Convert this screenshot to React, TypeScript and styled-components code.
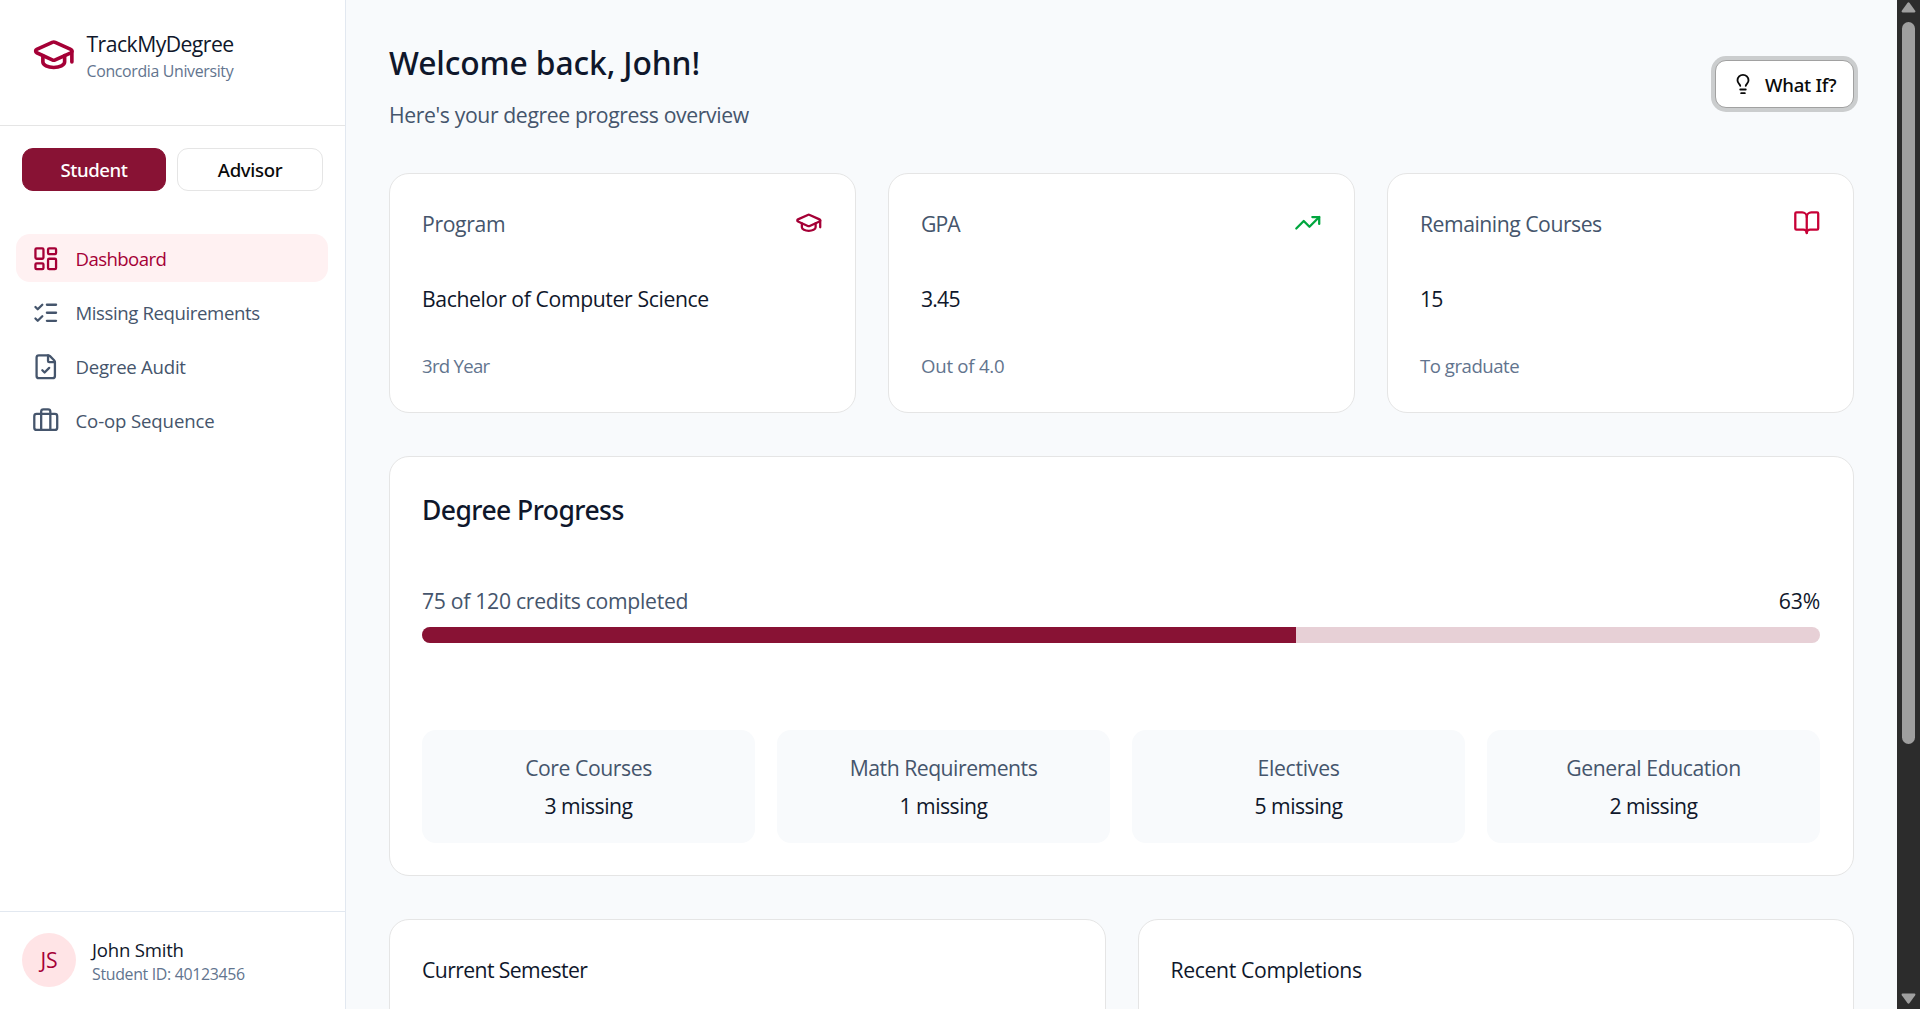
import React from "react";
import styled, { createGlobalStyle, css } from "styled-components";
import {
  BookOpen,
  Briefcase,
  FileCheck,
  GraduationCap,
  LayoutDashboard,
  Lightbulb,
  ListChecks,
  TrendingUp,
} from "lucide-react";

const color = {
  ink: "#0f172b",
  slate: "#45556c",
  muted: "#62748e",
  maroon: "#881234",
  rose: "#a50036",
  line: "#e2e8f0",
  border: "#e5e5e5",
  canvas: "#f8fafc",
};

const GlobalStyle = createGlobalStyle`
  *, *::before, *::after { box-sizing: border-box; }
  body {
    margin: 0;
    overflow: hidden;
    background: ${color.canvas};
    color: ${color.ink};
    font-family: "Open Sans", "Noto Sans", sans-serif;
  }
  button { font: inherit; }
  h1, h2, h3, p { margin: 0; font-weight: 400; }
  svg { display: block; flex: none; }
`;

const strong = css`
  font-family: "Noto Sans", "Open Sans", sans-serif;
  font-weight: 500;
`;

const Shell = styled.div`
  display: grid;
  grid-template-columns: 346px minmax(0, 1fr) 23px;
  height: 1009px;
  overflow: hidden;
`;

/* ---------- text ---------- */

interface TextProps {
  $track?: number;
  $tone?: string;
}

const Text = styled.p<TextProps>`
  font-size: 21.2px;
  line-height: 33px;
  white-space: nowrap;
  color: ${(p) => p.$tone ?? color.ink};
  letter-spacing: ${(p) => p.$track ?? 0}px;
`;

const SmallText = styled(Text)`
  font-size: 18.6px;
  line-height: 27px;
`;

const TinyText = styled(Text)`
  font-size: 15.9px;
  line-height: 22px;
`;

/* ---------- sidebar ---------- */

const Sidebar = styled.aside`
  display: flex;
  flex-direction: column;
  background: #fff;
  border-right: 1px solid ${color.line};
`;

const Brand = styled.div`
  display: flex;
  align-items: center;
  gap: 11px;
  height: 126px;
  padding: 0 32px 15px;
  border-bottom: 1px solid ${color.border};
`;

const BrandName = styled(Text)`
  line-height: 32px;
`;

const RoleSwitch = styled.div`
  display: grid;
  grid-template-columns: 144px 146px;
  gap: 11px;
  padding: 22px 22px 0;
`;

const RoleButton = styled.button<{ $active?: boolean; $track: number }>`
  ${strong}
  height: 43px;
  padding: 0;
  border: 1px solid ${(p) => (p.$active ? color.maroon : color.border)};
  border-radius: 11px;
  background: ${(p) => (p.$active ? color.maroon : "#fff")};
  color: ${(p) => (p.$active ? "#fff" : "#0a0a0a")};
  font-size: 18.6px;
  line-height: 27px;
  letter-spacing: ${(p) => p.$track}px;
`;

const Nav = styled.nav`
  display: flex;
  flex-direction: column;
  flex: 1;
  gap: 6px;
  padding: 43px 17px 0 16px;
`;

const NavItem = styled.a<{ $active?: boolean }>`
  display: flex;
  align-items: center;
  gap: 16px;
  height: 48px;
  padding: 1px 16px 0;
  border-radius: 14px;
  background: ${(p) => (p.$active ? "#fff1f2" : "transparent")};
  color: ${(p) => (p.$active ? color.rose : color.slate)};
`;

const Profile = styled.div`
  display: flex;
  align-items: center;
  gap: 16px;
  height: 98px;
  padding: 0 22px;
  border-top: 1px solid ${color.line};
`;

const Avatar = styled.div`
  display: grid;
  place-items: center;
  width: 54px;
  height: 54px;
  margin-bottom: 2px;
  border-radius: 50%;
  background: #ffe4e6;
`;

/* ---------- main ---------- */

const Main = styled.main`
  display: flex;
  flex-direction: column;
  gap: 43px;
  padding: 44px 43px 0;
  overflow: hidden;
`;

const PageHeader = styled.header`
  display: flex;
  justify-content: space-between;
  align-items: flex-start;
  height: 86px;
`;

const PageTitle = styled.h1`
  ${strong}
  margin: 1px 0 17px;
  font-size: 31.8px;
  line-height: 36px;
  letter-spacing: -0.12px;
  white-space: nowrap;
`;

const WhatIfButton = styled.button`
  ${strong}
  display: flex;
  align-items: center;
  gap: 11px;
  width: 139px;
  height: 48px;
  margin-top: 16px;
  padding: 0 0 0 16px;
  border: 1px solid #a1a1a1;
  border-radius: 11px;
  background: #fff;
  box-shadow: 0 0 0 4px #cbcdce;
  color: #0a0a0a;
  font-size: 18.6px;
  line-height: 27px;
  letter-spacing: -0.25px;
  white-space: nowrap;
`;

const StatRow = styled.section`
  display: grid;
  grid-template-columns: repeat(3, 1fr);
  gap: 32px;
  flex: none;
`;

const Card = styled.article`
  flex: none;
  padding: 33px 33px 33px 32px;
  border: 1px solid ${color.border};
  border-radius: 20px;
  background: #fff;
`;

const StatCard = styled(Card)`
  height: 240px;
`;

const StatHead = styled.div`
  display: flex;
  justify-content: space-between;
  align-items: flex-start;
  margin-bottom: 42px;
`;

const StatIcon = styled.span`
  display: block;
  margin-top: 2px;
`;

const StatValue = styled(Text)`
  margin-bottom: 37px;
`;

const ProgressCard = styled(Card)`
  height: 420px;
`;

const SectionTitle = styled.h2`
  ${strong}
  margin-bottom: 54px;
  font-size: 26.5px;
  line-height: 40px;
  letter-spacing: -0.56px;
  white-space: nowrap;
`;

const Spread = styled.div`
  display: flex;
  justify-content: space-between;
`;

const Track = styled.div`
  height: 16px;
  margin: 10px 0 87px;
  border-radius: 8px;
  background: #e7d0d6;
  overflow: hidden;
`;

const Fill = styled.div`
  height: 100%;
  background: ${color.maroon};
`;

const Tiles = styled.div`
  display: grid;
  grid-template-columns: repeat(4, 1fr);
  gap: 22px;
`;

const Tile = styled.div`
  display: flex;
  flex-direction: column;
  align-items: center;
  gap: 5px;
  height: 113px;
  padding-top: 21px;
  border-radius: 14px;
  background: ${color.canvas};
`;

const ListRow = styled.section`
  display: grid;
  grid-template-columns: repeat(2, 1fr);
  gap: 32px;
  flex: none;
`;

const ListCard = styled(Card)`
  height: 300px;
`;

/* ---------- scrollbar ---------- */

const ScrollTrack = styled.div`
  display: flex;
  flex-direction: column;
  align-items: center;
  justify-content: space-between;
  padding: 2px 0 5px;
  background: #2c2c2c;
`;

const ScrollThumb = styled.div`
  width: 13px;
  height: 722px;
  margin: 9px 0 auto;
  border-radius: 7px;
  background: #9f9f9f;
`;

const Arrow: React.FC<{ down?: boolean }> = ({ down }) => (
  <svg width="15" height="11" viewBox="0 0 15 11">
    <path
      d={
        down
          ? "M1.5 .5h12q1.4 .4 .7 1.7L8.6 10q-1.1 1.3-2.2 0L.8 2.2Q.1 .9 1.5 .5z"
          : "M1.5 10.5h12q1.4-.4 .7-1.7L8.6 1q-1.1-1.3-2.2 0L.8 8.8Q.1 10.1 1.5 10.5z"
      }
      fill="#9f9f9f"
    />
  </svg>
);

const navItems = [
  { label: "Dashboard", Icon: LayoutDashboard, track: -0.57, active: true },
  { label: "Missing Requirements", Icon: ListChecks, track: -0.4 },
  { label: "Degree Audit", Icon: FileCheck, track: -0.25 },
  { label: "Co-op Sequence", Icon: Briefcase, track: -0.13 },
];

const stats = [
  {
    label: ["Program", -0.35],
    value: ["Bachelor of Computer Science", -0.38],
    note: ["3rd Year", -0.72],
    Icon: GraduationCap,
    tint: color.rose,
  },
  {
    label: ["GPA", -1],
    value: ["3.45", -0.8],
    note: ["Out of 4.0", -0.24],
    Icon: TrendingUp,
    tint: "#00a63e",
  },
  {
    label: ["Remaining Courses", -0.48],
    value: ["15", -0.8],
    note: ["To graduate", -0.48],
    Icon: BookOpen,
    tint: "#c70036",
  },
] as const;

const tiles = [
  { label: "Core Courses", track: -0.44, missing: 3 },
  { label: "Math Requirements", track: -0.49, missing: 1 },
  { label: "Electives", track: -0.27, missing: 5 },
  { label: "General Education", track: -0.43, missing: 2 },
];

const credits = { done: 75, total: 120 };

export default function App() {
  const percent = (credits.done / credits.total) * 100;
  return (
    <>
      <GlobalStyle />
      <Shell>
        <Sidebar>
          <Brand>
            <GraduationCap size={43.5} color={color.rose} />
            <div>
              <BrandName $track={-0.55}>TrackMyDegree</BrandName>
              <TinyText $tone={color.muted} $track={-0.34}>
                Concordia University
              </TinyText>
            </div>
          </Brand>
          <RoleSwitch>
            <RoleButton $active $track={-0.42}>Student</RoleButton>
            <RoleButton $track={-0.35}>Advisor</RoleButton>
          </RoleSwitch>
          <Nav>
            {navItems.map(({ label, Icon, track, active }) => (
              <NavItem key={label} $active={active}>
                <Icon size={27.5} />
                <SmallText as="span" $tone="inherit" $track={track}>
                  {label}
                </SmallText>
              </NavItem>
            ))}
          </Nav>
          <Profile>
            <Avatar>
              <Text as="span" $tone={color.rose} $track={-0.2}>JS</Text>
            </Avatar>
            <div>
              <SmallText $track={-0.22}>John Smith</SmallText>
              <TinyText $tone={color.muted} $track={-0.32}>
                Student ID: 40123456
              </TinyText>
            </div>
          </Profile>
        </Sidebar>

        <Main>
          <PageHeader>
            <div>
              <PageTitle>Welcome back, John!</PageTitle>
              <Text $tone={color.slate} $track={-0.38}>
                Here's your degree progress overview
              </Text>
            </div>
            <WhatIfButton>
              <Lightbulb size={22} />
              What If?
            </WhatIfButton>
          </PageHeader>

          <StatRow>
            {stats.map(({ label, value, note, Icon, tint }) => (
              <StatCard key={label[0]}>
                <StatHead>
                  <Text $tone={color.slate} $track={label[1]}>{label[0]}</Text>
                  <StatIcon>
                    <Icon size={27.5} color={tint} />
                  </StatIcon>
                </StatHead>
                <StatValue $track={value[1]}>{value[0]}</StatValue>
                <SmallText $tone={color.muted} $track={note[1]}>{note[0]}</SmallText>
              </StatCard>
            ))}
          </StatRow>

          <ProgressCard>
            <SectionTitle>Degree Progress</SectionTitle>
            <Spread>
              <Text $tone={color.slate} $track={-0.3}>
                {`${credits.done} of ${credits.total} credits completed`}
              </Text>
              <Text $track={-0.2}>{`${Math.round(percent)}%`}</Text>
            </Spread>
            <Track>
              <Fill style={{ width: `${percent}%` }} />
            </Track>
            <Tiles>
              {tiles.map(({ label, track, missing }) => (
                <Tile key={label}>
                  <Text $tone={color.slate} $track={track}>{label}</Text>
                  <Text $track={-0.5}>{`${missing} missing`}</Text>
                </Tile>
              ))}
            </Tiles>
          </ProgressCard>

          <ListRow>
            <ListCard>
              <Text as="h3" $track={-0.6}>Current Semester</Text>
            </ListCard>
            <ListCard>
              <Text as="h3" $track={-0.36}>Recent Completions</Text>
            </ListCard>
          </ListRow>
        </Main>

        <ScrollTrack>
          <Arrow />
          <ScrollThumb />
          <Arrow down />
        </ScrollTrack>
      </Shell>
    </>
  );
}
